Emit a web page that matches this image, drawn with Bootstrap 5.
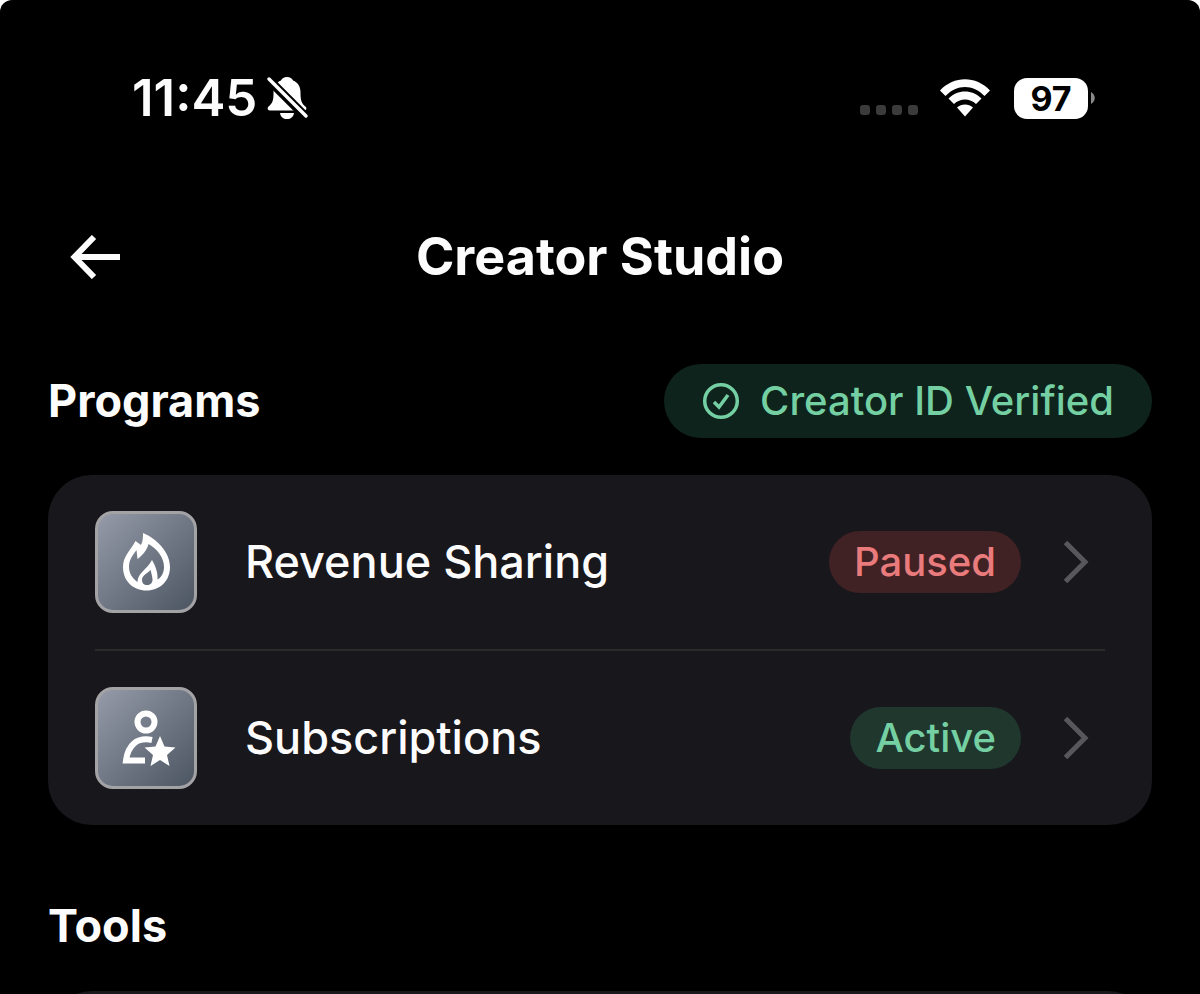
<!DOCTYPE html>
<html lang="en">
<head>
<meta charset="utf-8">
<meta name="viewport" content="width=device-width, initial-scale=1">
<title>Creator Studio</title>
<link href="https://cdn.jsdelivr.net/npm/bootstrap@5.3.0/dist/css/bootstrap.min.css" rel="stylesheet">
<style>
  body { background: #fff; color: #fcfcfd; font-family: Inter, "Liberation Sans", sans-serif; }
  .screen { background: #000; border-radius: 12px 12px 0 0; padding: 0 48px; }
  .status { height: 196px; padding: 0 56px 0 84px; }
  .clock { font-size: 51px; line-height: 60px; font-weight: 600; }
  .dots { gap: 6px; margin-right: 22px; }
  .dots i { width: 10px; height: 10px; border-radius: 3px; background: #3b3b3b; }
  .battery-level { width: 74px; height: 41px; border-radius: 13px; background: #fff; color: #000; font-size: 34px; line-height: 41px; font-weight: 700; }
  .topbar { height: 122px; display: grid; grid-template-columns: 94px 1fr 94px; align-items: center; }
  .back { padding: 0 0 0 22px; border: 0; background: none; line-height: 0; text-align: left; }
  .title { font-size: 52px; line-height: 64px; font-weight: 700; }
  .section-title { font-size: 45px; line-height: 56px; font-weight: 700; }
  .programs-head { margin: 46px 0 37px; height: 74px; }
  .pill { border-radius: 40px; font-weight: 500; font-size: 40px; }
  .verified { height: 74px; padding: 0 38px; gap: 20px; background: #0e231b; color: #74cfa3; }
  .state { height: 62px; padding: 0 25px; line-height: 62px; }
  .paused { background: #402225; color: #ea7b7c; }
  .active-state { background: #20372e; color: #74cfa3; }
  .panel { background: #18171c; border-radius: 44px; padding: 0 47px; }
  .item { padding: 36px 16px 36px 0; color: #fcfcfd; }
  .item + .item { border-top: 2px solid #2a2a2b; }
  .item-name { font-size: 45px; line-height: 56px; font-weight: 500; margin-left: 48px; }
  .tile { width: 102px; height: 102px; border-radius: 18px; border: 3px solid #a3a3a6; background: linear-gradient(135deg, #959ba8, #4c5562); }
  .chevron { margin-left: 42px; }
  .tools-head { margin: 73px 0 37px; }
  .tools-panel { height: 180px; }
</style>
</head>
<body>
<div class="screen vh-100 overflow-hidden">
  <div class="status d-flex align-items-center justify-content-between">
    <div class="d-flex align-items-center gap-2">
      <span class="clock">11:45</span>
      <svg width="44" height="46" viewBox="0 0 44 46" aria-label="Silent">
        <path fill="#fff" d="M22 2c3 0 5 1.500 6 3.500 5 2 7.500 6 7.500 12 0 8 1 11 5.500 14.500 1 2 0 3.500-2 3.500H5c-2 0-3-1.500-2-3.500 5-4 5.500-7 5.500-14.500 0-6 2.500-10 7.500-12 1-2 3-3.500 6-3.500zM15 38h14c-.7 4-3.300 6-7 6s-6.300-2-7-6z"/>
        <path stroke="#000" stroke-width="9" d="M2 3l40 40"/>
        <path stroke="#fff" stroke-width="3.500" stroke-linecap="round" d="M4 4l37 37"/>
      </svg>
    </div>
    <div class="d-flex align-items-center">
      <div class="dots d-flex mt-4"><i></i><i></i><i></i><i></i></div>
      <svg class="me-4" width="50" height="38" viewBox="0 0 50 38" fill="#fff" aria-label="Wi-Fi">
        <path d="M0 11.500C14-3.500 36-3.500 50 11.500L44.500 17C33 5 17 5 5.500 17zM8.500 19.500c9-9.500 24-9.500 33 0L36 25c-6-6-16-6-22 0zM17 28.500c4.500-4 11.500-4 16 0l-8 9z"/>
      </svg>
      <div class="battery-level text-center">97</div>
      <svg width="8" height="14" viewBox="0 0 8 14" aria-hidden="true"><path d="M3 1c5 3 5 9 0 12z" fill="#8a8a8a"/></svg>
    </div>
  </div>

  <header class="topbar">
    <button type="button" class="back" aria-label="Back">
      <svg width="50" height="44" viewBox="0 0 50 44" fill="none" stroke="#fcfcfd" stroke-width="6"><path d="M24 2L4.500 22 24 42M4 22h46"/></svg>
    </button>
    <h1 class="title m-0 text-center">Creator Studio</h1>
  </header>

  <main>
    <div class="programs-head d-flex align-items-center justify-content-between">
      <h2 class="section-title m-0">Programs</h2>
      <div class="pill verified d-flex align-items-center">
        <svg width="38" height="38" viewBox="0 0 38 38" fill="none" stroke="currentColor" stroke-width="3.500" aria-hidden="true"><circle cx="19" cy="19" r="16.300"/><path d="M12 20l5 5 9-12"/></svg>
        <span>Creator ID Verified</span>
      </div>
    </div>

    <div class="panel">
      <a href="#revenue" class="item d-flex align-items-center text-decoration-none">
        <span class="tile d-flex align-items-center justify-content-center">
          <svg width="54" height="62" viewBox="0 0 54 62" fill="#fff" fill-rule="evenodd" aria-hidden="true"><path d="M24 2C38 8 51 21 51 36 51 50 41 59.500 27.500 59.500S4 50 4 36C4 25 12 19 16.500 10L22 14C24 10 24 6 24 2zM29.500 13C28 19 24 24 18.500 28L17.500 19C13 25 10 29 10 36c0 6 3 11 8.500 15 0-9 9-12 14.500-22 4 7 6 13 5.500 19.500C43 46 45 41 45 36 45 26 38 18 29.500 13zM31.500 39C29 42 23 44 23 49c0 3 2 5 5 5s5.500-2 5.500-5c0-3-1-6-2-10z"/></svg>
        </span>
        <span class="item-name me-auto">Revenue Sharing</span>
        <span class="pill state paused">Paused</span>
        <svg class="chevron" width="26" height="44" viewBox="0 0 26 44" fill="none" stroke="#58585b" stroke-width="5" aria-hidden="true"><path d="M2.500 2.500L22 22 2.500 41.500"/></svg>
      </a>
      <a href="#subscriptions" class="item d-flex align-items-center text-decoration-none">
        <span class="tile d-flex align-items-center justify-content-center">
          <svg width="60" height="58" viewBox="-3 0 60 58" aria-hidden="true"><g fill="none" stroke="#fff" stroke-width="6"><circle cx="27" cy="13" r="8.500"/><path d="M33 31C18 28 9 36 7 51.500h19"/></g><path fill="#fff" d="M41 27l4.500 10.500 11 1-8.500 7.500 2.500 11L41 51l-9.500 6L34 46l-8.500-7.500 11-1z"/></svg>
        </span>
        <span class="item-name me-auto">Subscriptions</span>
        <span class="pill state active-state">Active</span>
        <svg class="chevron" width="26" height="44" viewBox="0 0 26 44" fill="none" stroke="#58585b" stroke-width="5" aria-hidden="true"><path d="M2.500 2.500L22 22 2.500 41.500"/></svg>
      </a>
    </div>

    <h2 class="section-title tools-head">Tools</h2>
    <div class="panel tools-panel"></div>
  </main>
</div>
<script src="https://cdn.jsdelivr.net/npm/bootstrap@5.3.0/dist/js/bootstrap.bundle.min.js"></script>
</body>
</html>
